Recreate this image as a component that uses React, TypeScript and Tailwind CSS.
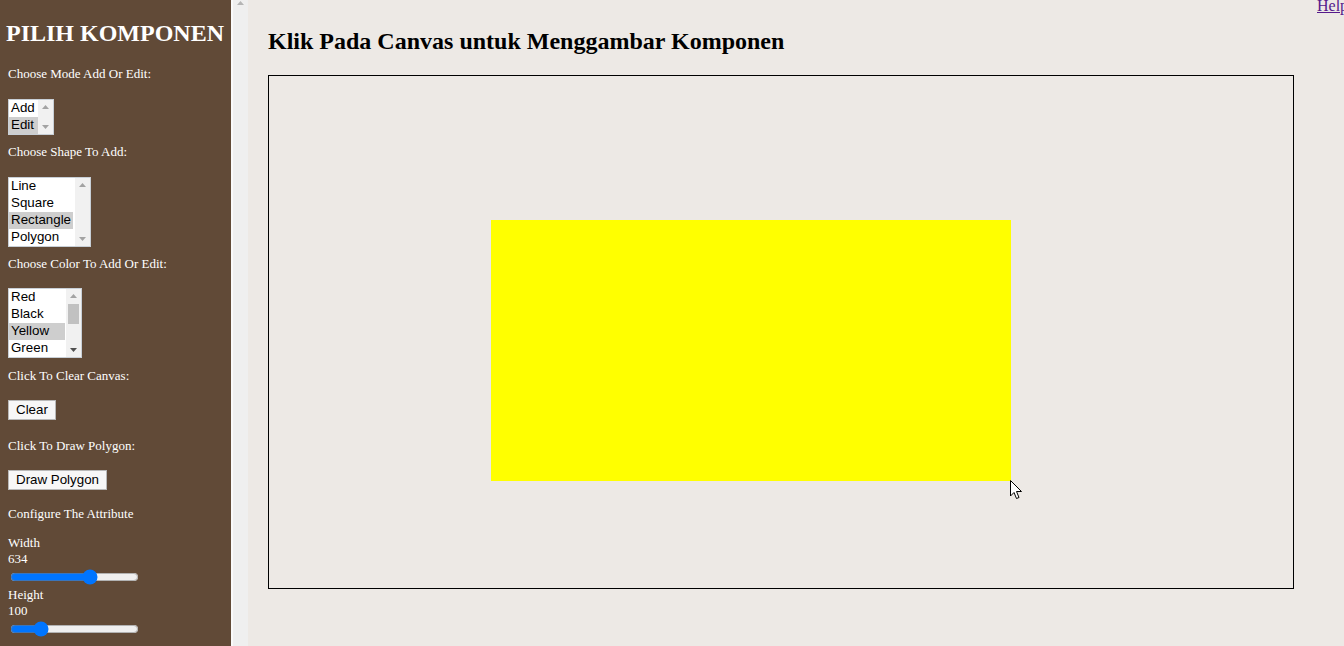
import React from "react";

//
const serif = { fontFamily: '"Liberation Serif", "Times New Roman", serif' };
const sans = { fontFamily: '"Liberation Sans", Arial, sans-serif' };

type ListBoxProps = {
  items: string[];
  selected: number;
  width: string;
  selWidth: string;
  thumb?: boolean;
};

const Arrow = ({ up, dark }: { up?: boolean; dark?: boolean }) => (
  <svg width="7" height="4" viewBox="0 0 7 4" className="block">
    <path
      d={up ? "M0 4 L3.5 0 L7 4 Z" : "M0 0 L3.5 4 L7 0 Z"}
      fill={dark ? "#505050" : "#a3a3a3"}
    />
  </svg>
);

const ListBox = ({ items, selected, width, selWidth, thumb }: ListBoxProps) => {
  return (
    <div
      className={`${width} flex border border-[#c8cfd6] bg-white text-[13.33px] text-black`}
      style={sans}
    >
      <div className="flex-1">
        {items.map((item, i) => (
          <div
            key={item}
            className={`h-[17px] leading-[16px] pl-[2px] ${
              i === selected ? `${selWidth} bg-[#cecece]` : ""
            }`}
          >
            {item}
          </div>
        ))}
      </div>
      {/* fake listbox scrollbar */}
      <div className="w-[15px] bg-[#f1f1f1] flex flex-col items-center justify-between py-[5px] relative">
        <Arrow up />
        {thumb && (
          <div className="absolute left-[2px] top-[15px] w-[11px] h-[20px] bg-[#c1c1c1]" />
        )}
        <Arrow dark={thumb} />
      </div>
    </div>
  );
};

const Label = ({ text, className = "" }: { text: string; className?: string }) => (
  <p className={`text-[13px] leading-[15px] text-white ${className}`} style={serif}>
    {text}
  </p>
);

const Btn = ({ text, className = "" }: { text: string; className?: string }) => (
  <button
    className={`block h-[20px] px-[7px] bg-[#f7f7f7] border border-[#b9b9b9] text-[13.33px] leading-[18px] text-black ${className}`}
    style={sans}
  >
    {text}
  </button>
);

const App = () => {
  return (
    <div className="relative flex w-[1344px] h-[646px] overflow-hidden bg-[#ede9e5]">
      {/* sidebar */}
      <div className="w-[231px] shrink-0 bg-[#614a37] pl-[8px]">
        <h1
          className="ml-[-2px] pt-[20px] text-[24px] leading-[27px] font-bold text-white whitespace-nowrap"
          style={serif}
        >
          PILIH KOMPONEN
        </h1>

        <Label text="Choose Mode Add Or Edit:" className="mt-[19px]" />
        <div className="mt-[18px]">
          <ListBox items={["Add", "Edit"]} selected={1} width="w-[46px]" selWidth="w-[29px]" />
        </div>

        <Label text="Choose Shape To Add:" className="mt-[9px]" />
        <div className="mt-[18px]">
          <ListBox
            items={["Line", "Square", "Rectangle", "Polygon"]}
            selected={2}
            width="w-[83px]"
            selWidth="w-[64px]"
          />
        </div>

        <Label text="Choose Color To Add Or Edit:" className="mt-[9px]" />
        <div className="mt-[17px]">
          <ListBox
            items={["Red", "Black", "Yellow", "Green"]}
            selected={2}
            width="w-[74px]"
            selWidth="w-[56px]"
            thumb
          />
        </div>

        <Label text="Click To Clear Canvas:" className="mt-[10px]" />
        <Btn text="Clear" className="mt-[17px]" />

        <Label text="Click To Draw Polygon:" className="mt-[18px]" />
        <Btn text="Draw Polygon" className="mt-[17px]" />

        <Label text="Configure The Attribute" className="mt-[16px]" />

        <p className="mt-[14px] text-[13px] leading-[16px] text-white" style={serif}>
          Width
        </p>
        <p className="text-[13px] leading-[16px] text-white" style={serif}>
          634
        </p>
        <input
          type="range"
          min={0}
          max={1000}
          defaultValue={634}
          className="block w-[129px] h-[16px] m-[2px]"
        />
        <p className="text-[13px] leading-[16px] text-white" style={serif}>
          Height
        </p>
        <p className="text-[13px] leading-[16px] text-white" style={serif}>
          100
        </p>
        <input
          type="range"
          min={0}
          max={500}
          defaultValue={100}
          className="block w-[129px] h-[16px] m-[2px]"
        />
      </div>

      {/* sidebar scrollbar strip */}
      <div className="w-[17px] shrink-0 bg-[#efefef] border-l-2 border-[#fafafa] flex justify-center pt-[1px]">
        <svg width="7" height="4" viewBox="0 0 7 4">
          <path d="M0 4 L3.5 0 L7 4 Z" fill="#b5b5b5" />
        </svg>
      </div>

      {/* main */}
      <div className="flex-1 pl-[20px]">
        <h2
          className="pt-[28px] text-[24px] leading-[27px] font-bold text-black whitespace-nowrap"
          style={serif}
        >
          Klik Pada Canvas untuk Menggambar Komponen
        </h2>
        <div className="relative mt-[20px] w-[1026px] h-[514px] border border-black">
          {/* drawn rectangle */}
          <div className="absolute left-[222px] top-[144px] w-[520px] h-[261px] bg-[#ffff00]" />
          {/* mouse cursor */}
          <svg
            className="absolute left-[741px] top-[404px]"
            width="13"
            height="20"
            viewBox="0 0 13 20"
          >
            <path
              d="M0.5 0.5 L0.5 16 L4 12.5 L6.5 18.5 L9 17.5 L6.5 11.5 L11.5 11.5 Z"
              fill="#ffffff"
              stroke="#000000"
              strokeWidth="1"
              strokeLinejoin="round"
            />
          </svg>
        </div>
      </div>

      {/* help link */}
      <a
        href="#"
        className="absolute left-[1317px] top-[-4px] text-[16px] leading-[19px] text-[#551a8b] underline whitespace-nowrap"
        style={serif}
      >
        Help
      </a>
    </div>
  );
};

export default App;
